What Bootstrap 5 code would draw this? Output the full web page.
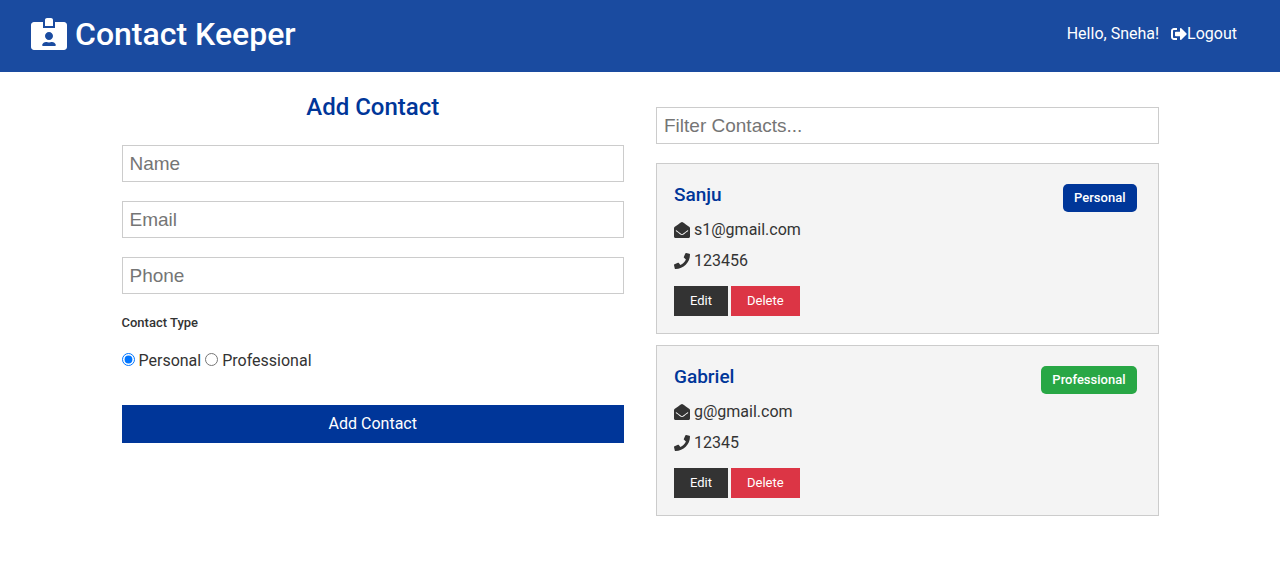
<!DOCTYPE html>
<html lang="en">
<head>
<meta charset="utf-8">
<meta name="viewport" content="width=device-width, initial-scale=1">
<title>Contact Keeper</title>
<link rel="stylesheet" href="https://cdn.jsdelivr.net/npm/bootstrap@5.3.0/dist/css/bootstrap.min.css">
<style>
  body { font-family: Roboto, sans-serif; font-size: 16px; line-height: 26px; color: #333; background: #fff; }
  .icon { width: 16px; height: 16px; fill: currentColor; flex: none; }
  .topbar { background: #1a4ba0; min-height: 72px; padding: 0 43px 4px 31px; }
  .topbar h1 { font-size: 32px; line-height: 40px; font-weight: 500; gap: 8px; }
  .topbar h1 .icon { width: 36px; height: 32px; }
  .topbar a { color: #fff; }
  .page { max-width: 1037px; }
  .page > .row { --bs-gutter-x: 32px; }
  .text-brand { color: #003699; }
  .form-title { font-size: 24px; line-height: 30px; font-weight: 500; margin: 20px 0 23px; }
  .field { font-family: "Liberation Sans", Arial, sans-serif; font-size: 19px; line-height: 23px; padding: 6px 7px; border: 1px solid #ccc; border-radius: 0; margin-bottom: 19px; }
  .field::placeholder { color: #757575; }
  .filter { margin-top: 35px; }
  .type-title { font-size: 13px; line-height: 20px; font-weight: 500; margin-bottom: 15px; }
  .choice { margin: 0 0 3px; width: 13px; height: 13px; }
  .btn-flat { --bs-btn-border-radius: 0; --bs-btn-border-width: 0; --bs-btn-color: #fff; --bs-btn-hover-color: #fff; --bs-btn-padding-x: 16px; --bs-btn-padding-y: 5px; --bs-btn-font-size: 13px; --bs-btn-line-height: 20px; }
  .btn-main { --bs-btn-bg: #003699; --bs-btn-hover-bg: #002a78; --bs-btn-font-size: 16px; --bs-btn-padding-y: 9px; margin-top: 31px; }
  .btn-edit { --bs-btn-bg: #333; --bs-btn-hover-bg: #111; }
  .btn-delete { --bs-btn-bg: #dc3545; --bs-btn-hover-bg: #b52a38; }
  .contact { background: #f4f4f4; border: 1px solid #ccc; border-radius: 0; color: #333; padding: 17px 21px 17px 17px; margin-bottom: 11px; }
  .contact h3 { font-size: 19px; line-height: 28px; font-weight: 500; }
  .contact li { gap: 4px; margin-bottom: 5px; line-height: 26px; }
  .contact ul { margin-bottom: 7px; }
  .actions { gap: 3px; }
  .tag { font-size: 13px; line-height: 20px; font-weight: 500; padding: 4px 11px; border-radius: 5px; margin-top: 3px; }
  .tag-personal { background: #003699; }
  .tag-professional { background: #28a745; }
</style>
</head>
<body>
<svg class="d-none" aria-hidden="true">
  <symbol id="mail" viewBox="0 0 512 512"><path d="M512 464c0 26.51-21.49 48-48 48H48c-26.51 0-48-21.49-48-48V200.724a48 48 0 0 1 18.387-37.776c24.913-19.529 45.501-35.365 164.2-121.511C199.412 29.17 232.797-.347 256 .003c23.198-.354 56.596 29.172 73.413 41.433 118.687 86.137 139.303 101.995 164.2 121.512A48 48 0 0 1 512 200.724V464zm-65.666-196.605c-2.563-3.728-7.7-4.595-11.339-1.907-22.845 16.873-55.462 40.705-105.582 77.079-16.825 12.266-50.21 41.781-73.413 41.43-23.211.344-56.559-29.143-73.413-41.43-50.114-36.37-82.734-60.204-105.582-77.079-3.639-2.688-8.776-1.821-11.339 1.907l-9.072 13.196a7.998 7.998 0 0 0 1.839 10.967c22.887 16.899 55.454 40.69 105.303 76.868 20.274 14.781 56.524 47.813 92.264 47.573 35.724.242 71.961-32.771 92.264-47.573 49.85-36.179 82.418-59.97 105.303-76.868a7.998 7.998 0 0 0 1.839-10.967l-9.072-13.196z"/></symbol>
  <symbol id="phone-icon" viewBox="0 0 512 512"><path d="M493.4 24.6l-104-24c-11.3-2.6-22.9 3.3-27.5 13.9l-48 112c-4.2 9.8-1.4 21.3 6.9 28l60.6 49.6c-36 76.7-98.9 140.5-177.2 177.2l-49.6-60.6c-6.8-8.3-18.2-11.1-28-6.9l-112 48C3.9 366.5-2 378.1.6 389.4l24 104C27.1 504.2 36.7 512 48 512c256.1 0 464-207.5 464-464 0-11.2-7.7-20.9-18.6-23.4z"/></symbol>
</svg>

<header class="topbar navbar d-flex justify-content-between align-items-center text-white">
  <h1 class="d-flex align-items-center mb-0">
    <svg class="icon" viewBox="0 0 576 512" aria-hidden="true"><path d="M528 64H384v96H192V64H48C21.5 64 0 85.5 0 112v352c0 26.5 21.5 48 48 48h480c26.5 0 48-21.5 48-48V112c0-26.5-21.5-48-48-48zM288 224c35.3 0 64 28.7 64 64s-28.7 64-64 64-64-28.7-64-64 28.7-64 64-64zm93.3 224H194.7c-10.4 0-18.8-10-15.6-19.8 8.3-25.6 32.4-44.2 60.9-44.2h8.2c12.3 5.1 25.7 8 39.8 8s27.6-2.9 39.8-8h8.2c28.4 0 52.5 18.5 60.9 44.2 3.2 9.9-5.2 19.8-15.6 19.8zM352 32c0-17.7-14.3-32-32-32h-64c-17.7 0-32 14.3-32 32v96h128V32z"/></svg>
    <span>Contact Keeper</span>
  </h1>
  <nav class="d-flex align-items-center" aria-label="Account">
    <span class="me-2 pe-1">Hello, Sneha!</span>
    <a href="#" class="d-flex align-items-center text-decoration-none"><svg class="icon" viewBox="0 0 512 512" aria-hidden="true"><path d="M497 273L329 441c-15 15-41 4.500-41-17v-96H152c-13.300 0-24-10.700-24-24v-96c0-13.300 10.700-24 24-24h136V88c0-21.400 25.900-32 41-17l168 168c9.300 9.400 9.300 24.600 0 34zM192 436v-40c0-6.600-5.400-12-12-12H96c-17.700 0-32-14.300-32-32V160c0-17.700 14.300-32 32-32h84c6.600 0 12-5.400 12-12V76c0-6.600-5.400-12-12-12H96c-53 0-96 43-96 96v192c0 53 43 96 96 96h84c6.600 0 12-5.400 12-12z"/></svg>Logout</a>
  </nav>
</header>

<main class="page container-fluid px-0">
  <div class="row mx-md-n3">
    <section class="col-md-6">
      <form>
        <h2 class="form-title text-brand text-center">Add Contact</h2>
        <input class="form-control field" type="text" placeholder="Name" aria-label="Name">
        <input class="form-control field" type="email" placeholder="Email" aria-label="Email">
        <input class="form-control field" type="tel" placeholder="Phone" aria-label="Phone">
        <h5 class="type-title">Contact Type</h5>
        <div class="d-flex align-items-center gap-1">
          <input class="choice" type="radio" name="type" id="personal" checked>
          <label for="personal">Personal</label>
          <input class="choice" type="radio" name="type" id="professional">
          <label for="professional">Professional</label>
        </div>
        <button type="submit" class="btn btn-flat btn-main w-100">Add Contact</button>
      </form>
    </section>
    <section class="col-md-6">
      <input class="form-control field filter" type="text" placeholder="Filter Contacts..." aria-label="Filter Contacts">
      <article class="card contact">
        <div class="d-flex justify-content-between align-items-start">
          <h3 class="text-brand mb-2">Sanju</h3>
          <span class="tag tag-personal text-white">Personal</span>
        </div>
        <ul class="list-unstyled">
          <li class="d-flex align-items-center"><svg class="icon" aria-hidden="true"><use href="#mail"/></svg>s1@gmail.com</li>
          <li class="d-flex align-items-center"><svg class="icon" aria-hidden="true"><use href="#phone-icon"/></svg>123456</li>
        </ul>
        <div class="actions d-flex">
          <button type="button" class="btn btn-flat btn-edit">Edit</button>
          <button type="button" class="btn btn-flat btn-delete">Delete</button>
        </div>
      </article>
      <article class="card contact">
        <div class="d-flex justify-content-between align-items-start">
          <h3 class="text-brand mb-2">Gabriel</h3>
          <span class="tag tag-professional text-white">Professional</span>
        </div>
        <ul class="list-unstyled">
          <li class="d-flex align-items-center"><svg class="icon" aria-hidden="true"><use href="#mail"/></svg>g@gmail.com</li>
          <li class="d-flex align-items-center"><svg class="icon" aria-hidden="true"><use href="#phone-icon"/></svg>12345</li>
        </ul>
        <div class="actions d-flex">
          <button type="button" class="btn btn-flat btn-edit">Edit</button>
          <button type="button" class="btn btn-flat btn-delete">Delete</button>
        </div>
      </article>
    </section>
  </div>
</main>
<script src="https://cdn.jsdelivr.net/npm/bootstrap@5.3.0/dist/js/bootstrap.bundle.min.js"></script>
</body>
</html>
